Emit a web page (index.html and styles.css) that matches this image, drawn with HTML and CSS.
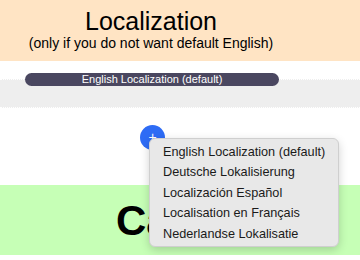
FILE: index.html
```html
<!DOCTYPE html>
<html lang="en">
<head>
    <meta charset="UTF-8">
    <title>Localization</title>
    <link rel="stylesheet" href="styles.css">
</head>
<body>
    <div class="header">
        <h1>Localization</h1>
        <p>(only if you do not want default English)</p>
    </div>
    <div class="choice">
        <div class="pill">English Localization (default)</div>
        <div class="band"></div>
    </div>
    <div class="adder">
        <button class="add">+</button>
    </div>
    <div class="next">
        <h2>Calendar</h2>
    </div>

    <ul class="menu">
        <li>English Localization (default)</li>
        <li>Deutsche Lokalisierung</li>
        <li>Localización Español</li>
        <li>Localisation en Français</li>
        <li>Nederlandse Lokalisatie</li>
    </ul>
</body>
</html>
```
FILE: styles.css
```css
body { margin: 0; font-family: "Liberation Sans", Arial, sans-serif; color: #000; position: relative; }
.header { background: #ffe4c4; height: 61px; padding-right: 58px; text-align: center; box-sizing: border-box; padding-top: 7px; }
.header h1 { margin: 0; font-size: 25px; font-weight: normal; line-height: 28px; }
.header p { margin: 0; font-size: 14px; line-height: 17px; }
.choice { padding-top: 12px; }
.pill { position: relative; z-index: 1; margin-left: 25px; width: 254px; height: 13px; border-radius: 7px; background: #4a4760; color: #fff; font-size: 11px; line-height: 13px; text-align: center; }
.band { margin-top: -7px; height: 27px; background: #eeeeee; border-top: 1px dotted #fff; border-bottom: 1px dotted #fff; }
.adder { height: 77px; padding-top: 17px; box-sizing: border-box; padding-left: 140px; }
.add { width: 25px; height: 25px; border-radius: 50%; border: none; background: #2e6cf5; color: #fff; font-size: 14px; line-height: 25px; padding: 0; display: block; }
.next { background: #c6ffb6; height: 70px; padding-left: 116px; box-sizing: border-box; padding-top: 14px; }
.next h2 { margin: 0; font-size: 42px; line-height: 44px; font-weight: bold; }
.menu { position: absolute; left: 149px; top: 138px; width: 190px; height: 109px; box-sizing: border-box; margin: 0; padding: 3px 0 0 0; list-style: none; background: #e8e8e8; border: 1px solid #cfcfcf; border-radius: 6px; box-shadow: 0 3px 10px rgba(0,0,0,0.18); }
.menu li { font-size: 12.7px; line-height: 20.4px; padding-left: 13px; color: #1a1a1a; }
```
